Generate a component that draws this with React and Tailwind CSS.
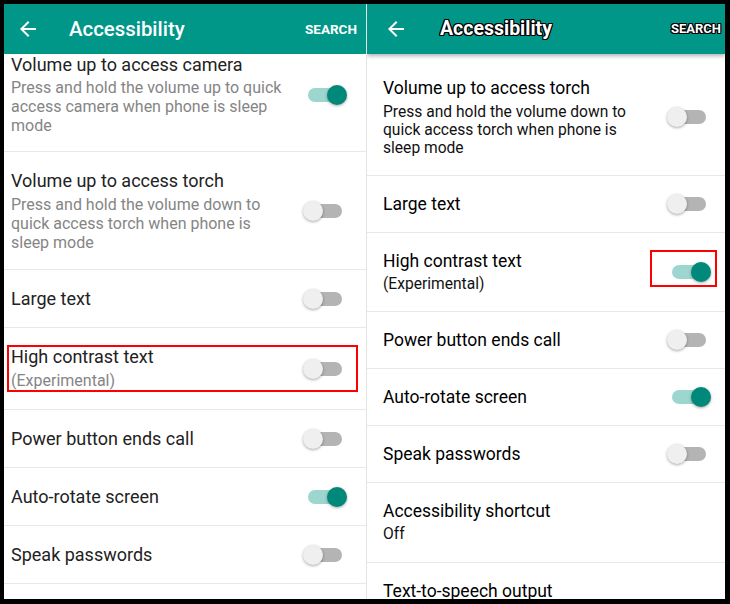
import React from 'react'

function BackArrow(){
  return (
    <svg width="24" height="24" viewBox="0 0 24 24" className="shrink-0">
      <path d="M20 11H7.83l5.59-5.59L12 4l-8 8 8 8 1.41-1.41L7.83 13H20v-2z" fill="#fff"/>
    </svg>
  )
}

function Toggle({ on }){
  return (
    <div className="relative w-[44px] h-[20px] shrink-0">
      <div className={`absolute left-[5px] right-[5px] top-[3px] h-[14px] rounded-full ${on ? 'bg-[#9dd6cf]' : 'bg-[#b4b4b4]'}`}/>
      <div className={`absolute top-0 w-[20px] h-[20px] rounded-full shadow-[0_1px_3px_rgba(0,0,0,0.35)] ${on ? 'right-0 bg-[#00897b]' : 'left-0 bg-[#efefef]'}`}/>
    </div>
  )
}

const left = [
  { title: 'Volume up to access camera', sub: ['Press and hold the volume up to quick', 'access camera when phone is sleep', 'mode'], on: true, pt: 'pt-0', pb: 'pb-[16px]', gap: 'mt-[2px]' },
  { title: 'Volume up to access torch', sub: ['Press and hold the volume down to', 'quick access torch when phone is', 'sleep mode'], on: false },
  { title: 'Large text', on: false },
  { title: 'High contrast text', sub: ['(Experimental)'], on: false, pb: 'pb-[18px]', mark: true },
  { title: 'Power button ends call', on: false },
  { title: 'Auto-rotate screen', on: true },
  { title: 'Speak passwords', on: false },
]

const right = [
  { title: 'Volume up to access torch', sub: ['Press and hold the volume down to', 'quick access torch when phone is', 'sleep mode'], on: false, pt: 'pt-[23px]', pb: 'pb-[18px]', gap: 'mt-[4px]' },
  { title: 'Large text', on: false },
  { title: 'High contrast text', sub: ['(Experimental)'], on: true, pb: 'pb-[18px]', mark: true },
  { title: 'Power button ends call', on: false },
  { title: 'Auto-rotate screen', on: true },
  { title: 'Speak passwords', on: false },
  { title: 'Accessibility shortcut', sub: ['Off'], pb: 'pb-[19px]' },
  { title: 'Text-to-speech output' },
]

function LeftRow({ r }){
  return (
    <div className={`relative flex items-center pl-[7px] pr-[19px] border-b border-[#e8e8e8] ${r.pt || 'pt-[18px]'} ${r.pb || 'pb-[17px]'}`}>
      <div className="flex-1">
        <div className="text-[18px] leading-[22px] text-[#222]">{r.title}</div>
        {r.sub && (
          <div className={`text-[16px] leading-[19px] text-[#858585] ${r.gap || 'mt-[3px]'} ${r.mark ? 'leading-[20px]' : ''}`}>
            {r.sub.map(s => <div key={s}>{s}</div>)}
          </div>
        )}
      </div>
      {r.on !== undefined && <Toggle on={r.on}/>}
      {r.mark && <div className="absolute left-[3px] top-[17px] w-[351px] h-[47px] border-2 border-[#ff0000]"/>}
    </div>
  )
}

function RightRow({ r }){
  return (
    <div className={`relative flex items-center pl-[16px] pr-[14px] border-b border-[#e8e8e8] ${r.pt || 'pt-[17px]'} ${r.pb || 'pb-[17px]'}`}>
      <div className="flex-1">
        <div className="text-[17.5px] leading-[22px] text-black">{r.title}</div>
        {r.sub && (
          <div className={`text-[15.6px] leading-[18px] text-[#111] ${r.gap || 'mt-[3px]'}`}>
            {r.sub.map(s => <div key={s}>{s}</div>)}
          </div>
        )}
      </div>
      {r.on !== undefined && <Toggle on={r.on}/>}
      {r.mark && <div className="absolute right-[8px] top-[17px] w-[67px] h-[37px] border-2 border-[#ff0000]"/>}
    </div>
  )
}

const outline = '[text-shadow:-1px_-1px_0_#000,1px_-1px_0_#000,-1px_1px_0_#000,1px_1px_0_#000,0_1px_0_#000,0_-1px_0_#000,1px_0_0_#000,-1px_0_0_#000]'

export default function App(){
  return (
    <div className="w-[730px] h-[604px] bg-black flex pt-[4px] pl-[4px] pr-[5px] pb-[5px] overflow-hidden font-['Roboto',sans-serif]">
      <div className="w-[362px] h-full bg-white flex flex-col overflow-hidden">
        <div className="h-[50px] shrink-0 bg-[#009688] flex items-center pl-[12px] pr-[9px]">
          <BackArrow/>
          <div className="ml-[29px] text-[20.4px] font-medium text-white">Accessibility</div>
          <div className="ml-auto text-[13.5px] font-bold text-white">SEARCH</div>
        </div>
        {left.map(r => <LeftRow key={r.title} r={r}/>)}
      </div>
      <div className="flex-1 h-full bg-white flex flex-col overflow-hidden border-l border-[#e4e4e4]">
        <div className="relative z-10 h-[50px] shrink-0 bg-[#009688] flex items-center pl-[17px] pr-[4px] shadow-[0_2px_4px_rgba(0,0,0,0.3)]">
          <BackArrow/>
          <div className={`ml-[32px] text-[19.5px] font-bold text-white ${outline}`}>Accessibility</div>
          <div className={`ml-auto text-[13px] font-bold text-white ${outline}`}>SEARCH</div>
        </div>
        {right.map(r => <RightRow key={r.title} r={r}/>)}
      </div>
    </div>
  )
}
